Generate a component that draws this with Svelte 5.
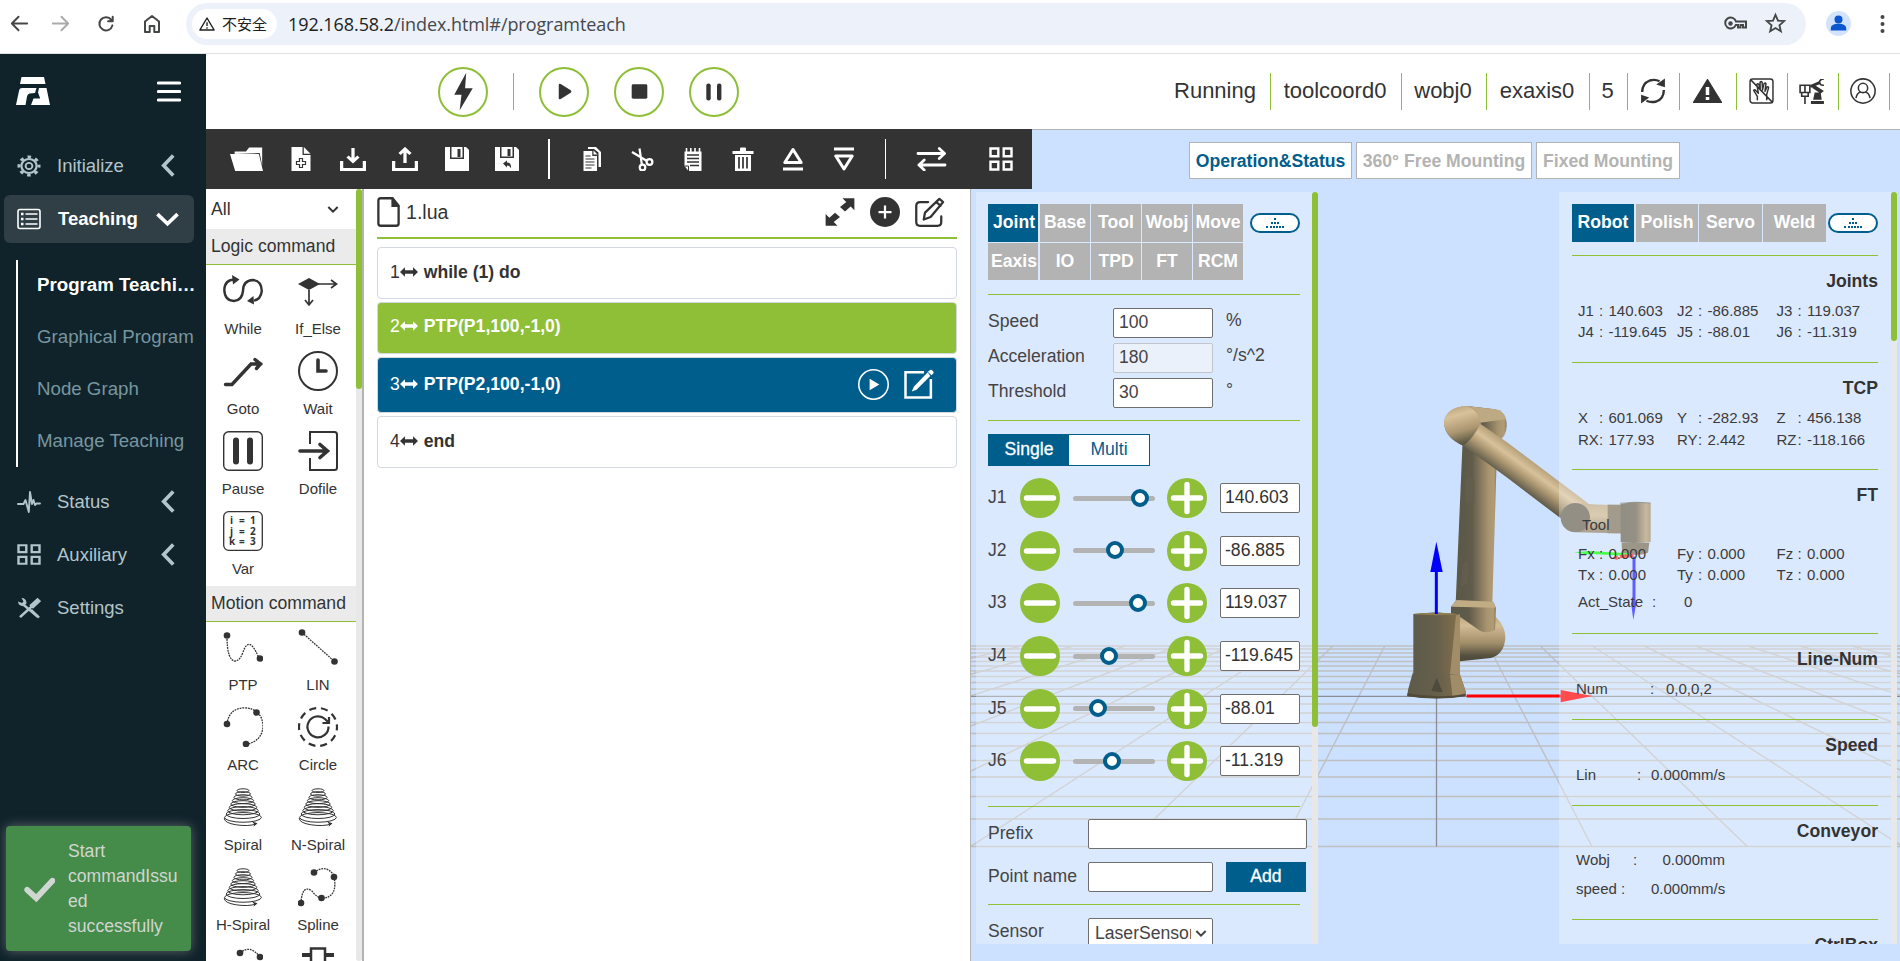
<script>
  const coil = () => {
    let s = '';
    for (let i = 0; i < 9; i++) {
      const w = 6 + i * 1.55;
      s += `<ellipse cx="20" cy="${3.6 + i * 3.35}" rx="${w}" ry="${1.8 + i * 0.38}"/>`;
    }
    return `<g fill="none" stroke="#333" stroke-width="1">${s}<path d="M1.2 31q0 5 12 6.800t20-.8"/></g><path d="M29 34.500l5.500 1.700-4 3.600.8-2.600z" fill="#333"/>`;
  };
  const st = (w, body) => `<g fill="none" stroke="currentColor" stroke-width="${w}" stroke-linecap="round" stroke-linejoin="round">${body}</g>`;
  const dot = (x, y) => `<circle cx="${x}" cy="${y}" r="3.3" fill="#333"/>`;
  const dots = (d) => `<path d="${d}" fill="none" stroke="#333" stroke-width="1.3" stroke-dasharray="1.800 .9"/>`;
  const grid4 = '<g fill="none" stroke="currentColor" stroke-width="2.4"><path d="M1.500 1.500h7.800v7.800H1.500zM14.700 1.500h7.800v7.800h-7.800zM1.500 14.700h7.800v7.800H1.500zM14.700 14.700h7.800v7.800h-7.800z"/></g>';
  const chevLeft = '<path d="M18 1.500L8 12l10 10.500" fill="none" stroke="currentColor" stroke-width="3.8"/>';

  const art = {
    back: st(2, '<path d="M20 12H4M11 5l-7 7 7 7"/>'),
    fwd: st(2, '<path d="M4 12h16M13 5l7 7-7 7"/>'),
    reload: st(2.2, '<path d="M19 13.500A7.200 7.200 0 1 1 17.800 7.500M19.300 4v5h-5"/>'),
    home: st(2, '<path d="M5 20V9.500L12 4l7 5.500V20h-4.700v-6H9.700v6z"/>'),
    warn: '<path d="M12 4L2.500 20h19z" fill="none" stroke="currentColor" stroke-width="1.900" stroke-linejoin="round"/><path d="M12 9.500v5M12 16.300v2" stroke="currentColor" stroke-width="1.800"/>',
    key: '<g fill="none" stroke="currentColor" stroke-width="2"><path d="M13 9.500h10v6h-3v-2.500h-2.500v2.500h-2.500v-2.500h-2.200a5.500 5.500 0 1 1 .2-3.500z"/></g><circle cx="7.500" cy="11.500" r="2.200" fill="currentColor"/>',
    star: '<path d="M12 3l2.600 6 6.400.5-4.900 4.300 1.500 6.300L12 16.700 6.400 20.100l1.500-6.300L3 9.500 9.400 9z" fill="none" stroke="currentColor" stroke-width="1.900"/>',
    bolt: '<path d="M14.400.5L3.800 14h6.400L8.600 23.500 20.200 10h-6.800z" fill="currentColor"/>',
    play: '<path d="M6 4.500q0-2 2-1.200l10.500 7.200q1.500 1.500 0 3L8 20.700q-2 .8-2-1.200z" fill="currentColor"/>',
    stop: '<rect x="4.500" y="4.500" width="15" height="15" rx="1.500" fill="currentColor"/>',
    pause: '<rect x="4.300" y="3.500" width="4.400" height="17" rx="2" fill="currentColor"/><rect x="15" y="3.500" width="4.400" height="17" rx="2" fill="currentColor"/>',
    folder: '<path d="M4.500 7V4.500h11L18.500.5h12.700v18L28.800 6z" fill="currentColor"/><path d="M0 7h28l4 17H5z" fill="currentColor"/>',
    addfile: '<path d="M2.500 0h11v8h8v16h-19z" fill="currentColor"/><path d="M14.800 0l6.700 6.700h-6.700z" fill="currentColor"/><path d="M10.500 11.500h3v3h3v3h-3v3h-3v-3h-3v-3h3z" fill="none" stroke="#333" stroke-width="1.200"/>',
    down: '<path d="M1.500 14v8.500h21V14" fill="none" stroke="currentColor" stroke-width="3"/><path d="M12 1v12M7 9.500l5 5 5-5" fill="none" stroke="currentColor" stroke-width="3"/>',
    up: '<path d="M1.500 14v8.500h21V14" fill="none" stroke="currentColor" stroke-width="3"/><path d="M12 16V3M7 7l5-5 5 5" fill="none" stroke="currentColor" stroke-width="3"/>',
    save: '<path d="M0 0h21l3 3v21H0z" fill="currentColor"/><path d="M5 0h14v12H5z" fill="#333"/><path d="M6.500 0h11v10.500h-11z" fill="currentColor"/><path d="M12.500 2h3v8h-3z" fill="#333"/>',
    saveundo: '<path d="M0 0h21l3 3v21H0z" fill="currentColor"/><path d="M5 0h14v11H5z" fill="#333"/><path d="M6.500 0h11v9.500h-11z" fill="currentColor"/><path d="M12.500 2h3v7h-3z" fill="#333"/><path d="M8 16.500l4-3v2q4.500 0 4 6-1-3-4-3v2z" fill="#333"/>',
    copy: '<path d="M8 0h8l5 5v15h-2.500V5.500L14 2H8z" fill="currentColor"/><path d="M3.500 4h8.800v5h4.700v15H3.500z" fill="currentColor"/><path d="M13.500 3.500l4 4h-4z" fill="currentColor"/><path d="M5.500 9h5M5.500 12h9M5.500 15h9M5.500 18h9M5.500 21h6" stroke="#333"/>',
    cut: '<g fill="none" stroke="currentColor" stroke-width="2.2"><path d="M2 5l15 9M9.500 1.500l2.500 17"/><circle cx="19.500" cy="15" r="2.900"/><circle cx="12.500" cy="20.500" r="2.800"/></g>',
    notes: '<path d="M3.500 4.500h17V24h-13l-4-5z" fill="currentColor"/><path d="M6 8h12M6 11.500h12M6 15h12M9 18.500h9" stroke="#333" stroke-width="1.500"/><path d="M5.500 1v5M9.800 1v5M14 1v5M18.500 1v5" stroke="currentColor" stroke-width="1.600"/><path d="M3.500 19h4v5" fill="none" stroke="#333"/>',
    trash: '<path d="M1.500 4H9V1.500Q9 .5 10 .5h4q1 0 1 1V4h7.500v3h-21z" fill="currentColor"/><path d="M4 8h16v16H4z" fill="currentColor"/><path d="M8 10v11.500M12 10v11.500M16 10v11.500" stroke="#333" stroke-width="1.700"/>',
    triup: '<path d="M12 2.500L3.800 15.500h16.400zM2 22h20" fill="none" stroke="currentColor" stroke-width="3" stroke-linejoin="round"/>',
    tridown: '<path d="M12 22L3.800 9h16.400zM2 2h20" fill="none" stroke="currentColor" stroke-width="3" stroke-linejoin="round"/>',
    swap: st(2.8, '<path d="M2 6.500h27M24 1.500l5.500 5-5.500 5M30 18H3M8.500 13L3 18l5.500 5"/>'),
    grid4,
    refresh: '<g fill="none" stroke="currentColor" stroke-width="2.2"><path d="M2 13Q2 5 9 2.300q5-1.500 9 .7M22 11q0 8-7 10.700-5 1.300-9-.7"/></g><path d="M23 .5v8l-8-2.500zM1 23.500v-8l7.500 2.500z" fill="currentColor"/>',
    alert: '<path d="M12 .5L0 24h24z" fill="currentColor" stroke="currentColor" stroke-linejoin="round"/><path d="M12 8v8M12 18v3" stroke="#fff" stroke-width="2.900"/>',
    hand: st(1.4, '<rect x="1" y="1" width="22" height="22" rx="2.500"/><path d="M8 20v-3L4.500 11.500q.8-1.500 2 0L9 14 7.500 6q1-1.400 2 0l1.300 5L10.600 4q1-1.300 2 0l.4 7L14.500 5q1-1 1.800.3l-1 7 2-4q1.500-.5 1.500.8L17 15v5M1.500 1.500l21 21"/>'),
    arm: '<path d="M11 21h12v3H11zM13 20l1.500-7h5.500l1 7zM20 14l-8-5.500 2-3 9 6z" fill="currentColor"/><path d="M10 6l9-4 1 2.500-9 4z" fill="currentColor"/><path d="M23 0q-4 0-4 3.200T23 6M1 6h9v7H1zM5.500 6v7M2.500 13v3.500h6V13M5.500 17v7" fill="none" stroke="currentColor" stroke-width="1.500"/>',
    user: '<g fill="none" stroke="currentColor" stroke-width="1.400"><circle cx="12" cy="12" r="11.200"/><circle cx="12" cy="9.200" r="4.300"/><path d="M5.500 18.500q1-5 4.500-5.500M18.500 18.500q-1-5-4.500-5.500"/></g>',
    gear: '<circle cx="12" cy="12" r="7.600" fill="none" stroke="currentColor" stroke-width="2.200"/><circle cx="12" cy="12" r="10" fill="none" stroke="currentColor" stroke-width="3" stroke-dasharray="3.600 4.254" stroke-dashoffset="1.800"/><circle cx="12" cy="12" r="3.400" fill="none" stroke="currentColor" stroke-width="1.900"/>',
    list: '<rect x="1" y="2.500" width="22" height="19" rx="2" fill="none" stroke="currentColor" stroke-width="1.600"/><path d="M4 7h2.500M4 12h2.500M4 17h2.500" stroke="currentColor" stroke-width="2.500"/><path d="M8.500 7h12M8.500 12h12M8.500 17h12" stroke="currentColor" stroke-width="1.300"/>',
    pulse: st(1.9, '<path d="M1 14h5.500l2-4 3.300 12L13 2l2 12 1.500-4 1.500 5 1.500-1.500h3.500"/>'),
    tools: '<path d="M3 22L16.500 8.500M5.500 7.500L20.500 21.500" stroke="currentColor" stroke-width="2.600"/><path d="M14 14l8 8.500M14 9l6.500-6.500 2 2L16 11z" stroke="currentColor" stroke-width="2.500" fill="currentColor"/><path d="M1 5l4 1.500L6.500 5 4.500 1q5 0 5 6l-3 3Q1.500 10 1 5z" fill="currentColor"/>',
    chevLeft,
    chevDown: '<path d="M1.500 7.500L12 17.500l10.500-10" fill="none" stroke="currentColor" stroke-width="3.800"/>',
    caret: '<path d="M4 8.500l8 8 8-8" fill="none" stroke="currentColor" stroke-width="3.400"/>',
    check: '<path d="M2.500 13l7 6.500L22 6" fill="none" stroke="currentColor" stroke-width="4.500" stroke-linecap="round"/>',
    file: '<path d="M1.200 3q0-2 2-2h10.300l5.300 6v14q0 2-2 2H3.200q-2 0-2-2z" fill="none" stroke="currentColor" stroke-width="2"/><path d="M12.500 0l7 8h-7z" fill="currentColor"/>',
    expand: '<path d="M14 1h9.500v9.500l-3-3-4.500 4-4-3.500 5-4zM10 23H.5v-9.500l3 3 4.500-4 4 3.500-5 4z" fill="currentColor"/>',
    plus: '<circle cx="12" cy="12" r="12" fill="currentColor"/><path d="M12 6.800v10.400M6.800 12h10.400" stroke="#fff" stroke-width="1.800"/>',
    edit: st(1.800, '<path d="M10.500 4H4Q1 4 1 7v13q0 3 3 3h14q3 0 3-3v-4.500"/><path d="M19.500 1.500l3 2.500L12.500 16l-5.500 2 1-5.500zM17.500 4.500l3 2.500"/>'),
    rowplay: '<circle cx="12" cy="12" r="11.400" fill="none" stroke="currentColor" stroke-width="1.200"/><path d="M9 7.500l7.500 4.500L9 16.500z" fill="currentColor"/>',
    rowedit: '<path d="M16 2.500H1.200v20.300h20.300V8" fill="none" stroke="currentColor" stroke-width="2"/><path d="M19 2.500L8 14l-1.800 4 3.800-1.500L21 5.500zM20 1.500q1.500-2 3 0 1.500 1.200 0 2.500l-1 1-3-2.800z" fill="currentColor"/>',
    lr: '<path d="M0 8l5.500-5.500V6h9V2.500L20 8l-5.500 5.500V10h-9v3.500z" fill="currentColor"/>',

    While: '<g fill="none" stroke="#333" stroke-width="2.400"><path d="M13 8.500Q2 8 1.300 18.500 1.500 29.500 11 30q8-.5 9-10 0-10.500 10-11 8.500.8 8.800 11-1 8.500-8 9.500"/></g><path d="M9 4l7.500 4.500-6.500 5zM30.500 25l-6.500 5 7 3.500z" fill="#333"/>',
    If_Else: '<path d="M0 13l11-6 11 6-11 6z" fill="#333"/><path d="M20 13h18M33 9l5.500 4-5.500 4M11 19v14M7 29l4 5 4-5" fill="none" stroke="#333" stroke-width="1.700"/>',
    Goto: '<path d="M2.500 33.500H9L28 13h10M32 8.500l5.500 4.500-4 4.500" fill="none" stroke="#333" stroke-width="3.400" stroke-linecap="round"/>',
    Wait: '<circle cx="20" cy="20" r="19" fill="none" stroke="#333" stroke-width="2"/><path d="M20 9v11h8" fill="none" stroke="#333" stroke-width="3.600" stroke-linecap="round"/>',
    Pause: '<rect x=".7" y=".7" width="38.600" height="38.600" rx="5" fill="none" stroke="#333" stroke-width="1.400"/><path d="M13 9.500v21M27 9.500v21" stroke="#333" stroke-width="6" stroke-linecap="round"/>',
    Dofile: '<path d="M12 13V1h24.500q2.500 0 2.500 2.500v33q0 2.500-2.500 2.500H12V27" fill="none" stroke="#333" stroke-width="2"/><path d="M2 20h26M22 13.500l7.500 6.500-7.500 6.500" fill="none" stroke="#333" stroke-width="3.600" stroke-linecap="round"/>',
    Var: '<rect x=".7" y=".7" width="38.600" height="38.600" rx="5" fill="none" stroke="#333" stroke-width="1.300"/><g font-family="Open Sans" font-weight="700" font-size="10" fill="#333"><text x="7" y="12.500">i</text><text x="16" y="12.500">=</text><text x="27" y="12.500">1</text><text x="7" y="23.500">j</text><text x="16" y="23.500">=</text><text x="27" y="23.500">2</text><text x="6" y="34">k</text><text x="16" y="34">=</text><text x="27" y="34">3</text></g>',
    PTP: dots('M4 9Q4 34 12.500 34 17 33.500 20 25q6-17 15 4L38 31') + dot(4, 8.500) + dot(37, 31.500),
    LIN: dots('M4 5.500L36.500 34.500') + dot(4, 5.500) + dot(36.500, 34.500),
    ARC: dots('M4 17Q6 1 22 .8 39 2 40 19q-.5 15-17 18.500') + dot(4, 17) + dot(33.500, 5.500) + dot(23, 37),
    Circle: '<circle cx="20" cy="20" r="19" fill="none" stroke="#333" stroke-width="2.200" stroke-dasharray="7 4.940" stroke-dashoffset="3.500"/><path d="M30.500 19.500A10.500 10.500 0 1 1 27 12l3 3M31 10v6h-6.500" fill="none" stroke="#333" stroke-width="2.200"/>',
    Spiral: coil(), 'N-Spiral': coil(), 'H-Spiral': coil(),
    Spline: dots('M16 5.500Q27-3 35.500 7.500 41 30 24 31.500 18 30 14 24 4 17 3 36') + dot(16, 5.500) + dot(36, 10) + dot(23.500, 31) + dot(3, 36),
    next1: dots('M17 6q10-9 20 4') + dot(17, 6) + dot(37, 10),
    next2: '<path d="M4 8h10M26 8h10" stroke="#333" stroke-width="4"/><path d="M13 14V1.500h14V14" fill="none" stroke="#333" stroke-width="2.500"/>'
  };

  const tools = ['folder', 'addfile', 'down', 'up', 'save', 'saveundo', '|', 'copy', 'cut', 'notes', 'trash', 'triup', 'tridown', '|', 'swap', 'grid4'];
  const logic = ['While', 'If_Else', 'Goto', 'Wait', 'Pause', 'Dofile', 'Var'];
  const motion = ['PTP', 'LIN', 'ARC', 'Circle', 'Spiral', 'N-Spiral', 'H-Spiral', 'Spline', 'next1', 'next2'];
  const lines = [
    { n: 1, code: 'while (1) do' },
    { n: 2, code: 'PTP(P1,100,-1,0)', kind: 'green' },
    { n: 3, code: 'PTP(P2,100,-1,0)', kind: 'blue' },
    { n: 4, code: 'end' }
  ];
  const joints = [
    ['J1', '140.603', 67], ['J2', '-86.885', 41.500], ['J3', '119.037', 65],
    ['J4', '-119.645', 35.500], ['J5', '-88.01', 24.500], ['J6', '-11.319', 38.500]
  ];
  const horiz = [646, 649, 653, 657, 661.500, 666, 671, 676.500, 682.500, 689, 704, 713, 722.500, 733.500, 746, 760.500, 777, 796.500, 819, 846.500];
  const fan = Array.from({ length: 21 }, (_, i) => i - 10);
</script>

{#snippet icon(name, w = 24, h = 24, vb = '0 0 24 24')}
  <svg width={w} height={h} viewBox={vb} preserveAspectRatio="none">{@html art[name]}</svg>
{/snippet}

{#snippet chip()}
  <span class="chip"><svg width="18" height="11" viewBox="0 0 18 11">
    <path d="M8 1h2M5 5h2M8 5h2M11 5h2M0 9h2M4 9h2M7 9h2M10 9h2M13 9h2M16 9h2" stroke="#005e8d" stroke-width="2" /></svg></span>
{/snippet}

{#snippet stat(k, v)}
  <div class="stat"><span>{k}</span><b>:</b><i>{v}</i></div>
{/snippet}

{#snippet cmds(names, cls = '')}
  <div class="cmds {cls}">
    {#each names as n}
      <div class="cmd">{@render icon(n, 40, 40, '0 0 40 40')}<span>{n.startsWith('next') ? '' : n}</span></div>
    {/each}
  </div>
{/snippet}

<div class="page">
  <div class="chrome">
    <span class="nav">{@render icon('back', 23, 23)}</span>
    <span class="nav faded">{@render icon('fwd', 23, 23)}</span>
    <span class="nav">{@render icon('reload', 22, 22)}</span>
    <span class="nav">{@render icon('home', 24, 24)}</span>
    <div class="address">
      <span class="secure">{@render icon('warn', 18, 18)}<em>不安全</em></span>
      <span class="url"><em>192.168.58.2</em>/index.html#/programteach</span>
      <span class="addricons">{@render icon('key', 24, 24)}{@render icon('star', 23, 23)}</span>
    </div>
    <span class="avatar"><svg width="25" height="25" viewBox="0 0 25 25"><circle cx="12.500" cy="12.500" r="12.500" fill="#d3e3fd" /><circle cx="12.500" cy="8.500" r="4" fill="#0b57d0" /><path d="M4.800 19.500v-2.300q0-4.500 7.700-4.500t7.700 4.500v2.300z" fill="#0b57d0" /></svg></span>
    <span class="kebab"><svg width="5" height="20" viewBox="0 0 5 20"><circle cx="2.500" cy="3" r="2" /><circle cx="2.500" cy="10" r="2" /><circle cx="2.500" cy="17" r="2" /></svg></span>
  </div>

  <div class="app">
    <aside>
      <div class="brand">
        <svg width="34" height="28" viewBox="0 0 34 28" fill="#fff"><path d="M5.500 0H28l1.500 7H4zM0 28L3.200 13q.5-2 2.800-2h14.500L19 16l-5.500.5q-2 .5-2.500 3L9.500 28zM23 11h7.500L34 28H15l2.500-6.500h6.700L22 15.500z" /></svg>
        <svg width="24" height="21" viewBox="0 0 24 21"><path d="M1.500 2h21M1.500 10.500h21M1.500 19h21" stroke="#fff" stroke-width="3.200" stroke-linecap="round" /></svg>
      </div>
      <div class="item">{@render icon('gear', 22, 22)}<span>Initialize</span>{@render icon('chevLeft', 23, 23)}</div>
      <div class="item active">{@render icon('list')}<span>Teaching</span>{@render icon('chevDown', 23, 23)}</div>
      <div class="sub">
        <span class="cur">Program Teaching</span><span>Graphical Program</span><span>Node Graph</span><span>Manage Teaching</span>
      </div>
      <div class="item">{@render icon('pulse')}<span>Status</span>{@render icon('chevLeft', 23, 23)}</div>
      <div class="item">{@render icon('grid4', 21, 21)}<span>Auxiliary</span>{@render icon('chevLeft', 23, 23)}</div>
      <div class="item">{@render icon('tools', 22, 22)}<span>Settings</span></div>
      <div class="toast">{@render icon('check', 31, 31)}<p>Start commandIssued successfully</p></div>
    </aside>

    <main>
      <header>
        <div class="run">
          <span class="round">{@render icon('bolt', 27, 39)}</span>
          <span class="bar"></span>
          <span class="round">{@render icon('play', 23, 21)}</span>
          <span class="round">{@render icon('stop', 25, 23)}</span>
          <span class="round">{@render icon('pause', 24, 24)}</span>
        </div>
        <div class="info">
          <span>Running</span><span>toolcoord0</span><span>wobj0</span><span>exaxis0</span><span>5</span>
          <span>{@render icon('refresh', 26, 26)}</span><span>{@render icon('alert', 29, 24)}</span><span>{@render icon('hand', 25, 26)}</span>
          <span>{@render icon('arm', 26, 25)}</span><span>{@render icon('user', 26, 26)}</span>
        </div>
      </header>

      <div class="work">
        <div class="toolbar">
          {#each tools as t, i}
            {#if t === '|'}<span class="tsep" class:thin={i > 8}></span>
            {:else if t === 'folder'}{@render icon(t, 33, 24, '0 0 32 24')}
            {:else if t === 'swap'}{@render icon(t, 31, 24, '0 0 32 24')}
            {:else if t === 'down' || t === 'up'}{@render icon(t, 26, 24)}
            {:else}{@render icon(t, 24, 24)}{/if}
          {/each}
        </div>

        <div class="palette">
          <div class="list">
            <div class="filter"><span>All</span>{@render icon('caret', 14, 14)}</div>
            <div class="band">Logic command</div>
            {@render cmds(logic)}
            <div class="band">Motion command</div>
            {@render cmds(motion, 'motion')}
          </div>
          <div class="track"><div class="thumb t1"></div></div>
        </div>

        <div class="program">
          <div class="title">
            {@render icon('file', 23, 30, '0 0 20 24')}<span>1.lua</span>
            {@render icon('expand', 30, 30)}{@render icon('plus', 30, 30)}{@render icon('edit', 30, 30)}
          </div>
          {#each lines as l}
            <div class="line {l.kind ?? ''}">
              <span>{l.n}</span>{@render icon('lr', 18, 14, '0 0 20 16')}<b>{l.code}</b>
              {#if l.n === 3}<span class="acts">{@render icon('rowplay', 31, 31)}{@render icon('rowedit', 30, 30)}</span>{/if}
            </div>
          {/each}
        </div>

        <div class="scene">
          <svg class="world" width="929" height="831" viewBox="971 130 929 831">
            <defs>
              <linearGradient id="up"><stop offset="0" stop-color="#5b5847" /><stop offset=".4" stop-color="#605b4a" /><stop offset=".8" stop-color="#a8946f" /><stop offset=".94" stop-color="#b09c76" /><stop offset="1" stop-color="#85785d" /></linearGradient>
              <linearGradient id="fore" gradientUnits="userSpaceOnUse" x1="630" y1="232" x2="568" y2="318"><stop offset="0" stop-color="#b09b75" /><stop offset=".3" stop-color="#d8c29b" /><stop offset=".55" stop-color="#ab9671" /><stop offset=".85" stop-color="#635e4c" /><stop offset="1" stop-color="#4d4a3c" /></linearGradient>
              <linearGradient id="elbow" x1="0" y1="0" x2=".25" y2="1"><stop offset="0" stop-color="#b09b75" /><stop offset=".3" stop-color="#d8c29b" /><stop offset=".7" stop-color="#ab9671" /><stop offset="1" stop-color="#5d5845" /></linearGradient>
              <linearGradient id="sh" x1="0" y1="0" x2="0" y2="1"><stop offset="0" stop-color="#ac9873" /><stop offset=".3" stop-color="#d2bc95" /><stop offset=".65" stop-color="#a08d68" /><stop offset=".88" stop-color="#565241" /><stop offset="1" stop-color="#4b483a" /></linearGradient>
              <linearGradient id="base"><stop offset="0" stop-color="#5e5b4a" /><stop offset=".5" stop-color="#665f4b" /><stop offset=".9" stop-color="#7f6d4b" /></linearGradient>
              <linearGradient id="tool"><stop offset="0" stop-color="#625e50" /><stop offset=".5" stop-color="#67604f" /><stop offset=".85" stop-color="#b09c76" /><stop offset="1" stop-color="#958566" /></linearGradient>
              <linearGradient id="wr" x1="0" y1="0" x2="0" y2="1"><stop offset="0" stop-color="#b9a681" /><stop offset=".4" stop-color="#cbb791" /><stop offset="1" stop-color="#817359" /></linearGradient>
            </defs>
            <g stroke="#bfc0c1" stroke-width="1.400">
              {#each horiz as y}<path d="M971 {y}H1900" />{/each}
              {#each fan as k}{#if k !== 0}<path d="M{1436.600 + 51.900 * k} 646L{1436.600 + 155.300 * k} 846.500" />{/if}{/each}
            </g>
            <path d="M971 696.300H1900M1436.500 646V846.500" stroke="#8a8e94" stroke-width="1.300" />
            <g transform="translate(1320 380) scale(.33333)">
              <path d="M440 948H722" stroke="#f00" stroke-width="9" /><path d="M722 930L818 948 722 967z" fill="#f00" />
              <path d="M428 180L530 240 517 670H407z" fill="url(#up)" />
              <path d="M437 300q12-20 24-4v70q-12 12-26 0zM427 556q8-18 18-6v60l-22 10z" fill="#625d4c" />
              <path d="M410 706L500 690Q522 702 532 716 556 740 556 772 554 822 513 834L420 844z" fill="url(#sh)" />
              <path d="M393 680L410 660 520 665 528 683 525 750Q500 762 480 752L422 712 393 703z" fill="url(#up)" />
              <path d="M393 680L410 660 520 665 527 683z" fill="#c1ac86" />
              <path d="M280 702L350 697 420 704V885H280z" fill="url(#base)" />
              <path d="M408 706L420 703V885L390 883z" fill="#a18d68" />
              <path d="M280 872V882Q330 873 390 882L420 884 438 936 436 948Q350 962 262 948L264 930z" fill="url(#base)" />
              <path d="M390 884L420 882 438 938 398 954z" fill="#a08c67" />
              <path d="M350 893L368 937 334 933z" fill="#4e4a3c" />
              <path d="M262 940Q350 956 438 942L436 949Q350 962 262 949z" fill="#514a38" />
              <ellipse cx="347" cy="702" rx="65" ry="3.500" fill="#8f7c50" />
              <path d="M349 702V570" stroke="#00f" stroke-width="9" /><path d="M349 485L368 576H331z" fill="#00f" />
              <path d="M440 78L525 88Q561 95 560 138 558 168 540 180L480 135z" fill="url(#up)" />
              <path d="M440 78L525 88Q552 92 558 118L480 128z" fill="#bda983" />
              <path d="M372 128Q376 82 440 78 478 84 482 132L560 186 804 370 820 420 780 450 718 412 560 292 430 197Q374 172 372 128z" fill="url(#fore)" />
              <path d="M372 128Q376 82 440 78 478 90 482 132 455 180 430 197 374 172 372 128z" fill="url(#elbow)" />
              <path d="M785 370Q830 376 905 375V460L770 457z" fill="url(#wr)" />
              <path d="M863 374H905V460H863z" fill="#7a6f59" />
              <circle cx="766" cy="413" r="44" fill="#655f4f" />
              <path d="M902 372Q945 362 992 370V486Q945 492 902 487z" fill="url(#tool)" />
              <path d="M905 488H988L984 518Q950 530 906 520z" fill="#716957" />
              <path d="M900 370Q945 364 992 369" stroke="#4c4839" stroke-width="2" fill="none" />
              <path d="M942 530V680" stroke="#1a1aff" stroke-width="9" /><path d="M933 668H949L940 720z" fill="#1a1aff" />
              <path d="M930 524L815 518" stroke="#0f0" stroke-width="8" /><path d="M762 517L816 512V525z" fill="#0f0" />
              <path d="M940 526L900 530" stroke="#f22" stroke-width="10" /><path d="M875 535L893 526V540z" fill="#f22" />
            </g>
          </svg>

          <div class="mounts"><span class="on">Operation&amp;Status</span><span>360° Free Mounting</span><span>Fixed Mounting</span></div>

          <div class="panels">
            <div class="panel op">
              <div class="body">
                <div class="tabrow">
                  <div class="tabs five">
                    {#each ['Joint', 'Base', 'Tool', 'Wobj', 'Move', 'Eaxis', 'IO', 'TPD', 'FT', 'RCM'] as t}<span class:on={t === 'Joint'}>{t}</span>{/each}
                  </div>
                  {@render chip()}
                </div>
                <hr />
                <div class="params">
                  <span>Speed</span><div class="field">100</div><i>%</i>
                  <span>Acceleration</span><div class="field off">180</div><i>°/s^2</i>
                  <span>Threshold</span><div class="field">30</div><i>°</i>
                </div>
                <hr />
                <div class="mode"><span class="on">Single</span><span>Multi</span></div>
                <div class="joints">
                  {#each joints as [n, v, x]}
                    <div class="joint">
                      <span>{n}</span>
                      <svg width="40" height="40" viewBox="0 0 40 40"><circle cx="20" cy="20" r="20" fill="#8ebf37" /><path d="M6.500 20h27" stroke="#fff" stroke-width="5.400" stroke-linecap="round" /></svg>
                      <div class="slider"><div class="knob" style="left:{x - 9}px"></div></div>
                      <svg width="40" height="40" viewBox="0 0 40 40"><circle cx="20" cy="20" r="20" fill="#8ebf37" /><path d="M6.500 20h27M20 6.500v27" stroke="#fff" stroke-width="5.400" stroke-linecap="round" /></svg>
                      <div class="field">{v}</div>
                    </div>
                  {/each}
                </div>
                <hr />
                <div class="point">
                  <span>Prefix</span><div class="field wide"></div>
                  <span>Point name</span><div class="field"></div><button>Add</button>
                </div>
                <hr />
                <div class="sensor"><span>Sensor</span><div class="field"><em>LaserSensor</em>{@render icon('caret', 14, 14)}</div></div>
              </div>
              <div class="track"><div class="thumb t2"></div></div>
            </div>

            <div class="panel status">
              <div class="body">
                <div class="tabrow">
                  <div class="tabs four">{#each ['Robot', 'Polish', 'Servo', 'Weld'] as t}<span class:on={t === 'Robot'}>{t}</span>{/each}</div>
                  {@render chip()}
                </div>
                <section class="s3">
                  <h4>Joints</h4>
                  <div class="stats">{@render stat('J1', '140.603')}{@render stat('J2', '-86.885')}{@render stat('J3', '119.037')}{@render stat('J4', '-119.645')}{@render stat('J5', '-88.01')}{@render stat('J6', '-11.319')}</div>
                </section>
                <section class="s3 tcp">
                  <h4>TCP</h4>
                  <div class="stats">{@render stat('X', '601.069')}{@render stat('Y', '-282.93')}{@render stat('Z', '456.138')}{@render stat('RX', '177.93')}{@render stat('RY', '2.442')}{@render stat('RZ', '-118.166')}</div>
                </section>
                <section class="ft">
                  <h4>FT</h4>
                  <p>Tool</p>
                  <div class="stats">{@render stat('Fx', '0.000')}{@render stat('Fy', '0.000')}{@render stat('Fz', '0.000')}{@render stat('Tx', '0.000')}{@render stat('Ty', '0.000')}{@render stat('Tz', '0.000')}</div>
                  <div class="kv act"><span>Act_State</span><b>:</b><i>0</i></div>
                </section>
                <section class="s1"><h4>Line-Num</h4><div class="kv num"><span>Num</span><b>:</b><i>0,0,0,2</i></div></section>
                <section class="s1"><h4>Speed</h4><div class="kv lin"><span>Lin</span><b>:</b><i>0.000mm/s</i></div></section>
                <section class="s2">
                  <h4>Conveyor</h4>
                  <div class="kv wobj"><span>Wobj</span><b>:</b><i>0.000mm</i></div>
                  <div class="kv spd"><span>speed</span><b>:</b><i>0.000mm/s</i></div>
                </section>
                <section><h4>CtrlBox</h4></section>
              </div>
              <div class="track"><div class="thumb t3"></div></div>
            </div>
          </div>
        </div>
      </div>
    </main>
  </div>
</div>

<style>
  * { box-sizing: border-box; }
  svg { display: block; flex: none; }
  em, i { font-style: normal; }
  .page { width: 1900px; height: 961px; overflow: hidden; background: #fff; color: #333; font: 17.6px/24px "Liberation Sans", Arial, sans-serif; }

  .chrome { height: 54px; padding-bottom: 6px; border-bottom: 1px solid #dfe1e5; display: flex; align-items: center; color: #454746; }
  .nav { width: 45px; display: flex; justify-content: center; }
  .nav:first-child { width: 38px; }
  .nav:nth-child(3) { width: 46px; }
  .nav:nth-child(4) { width: 45px; margin-right: 12px; }
  .faded { color: #a9abab; }
  .address { width: 1620px; height: 42px; border-radius: 21px; background: #ecf1fa; display: flex; align-items: center; padding: 0 19px 0 6px; }
  .secure { width: 85px; height: 30px; border-radius: 15px; background: #fff; display: flex; align-items: center; gap: 6px; padding-left: 6px; font: 15px/30px "Noto Sans CJK SC", sans-serif; white-space: nowrap; color: #1f1f1f; }
  .secure em { padding-top: 1px; }
  .url { margin-left: 11px; font: 18px/30px "Open Sans", sans-serif; letter-spacing: -.07px; color: #45484c; flex: 1; }
  .url em { color: #202124; }
  .addricons { display: flex; gap: 17px; align-items: center; }
  .avatar { margin-left: 20px; }
  .kebab { margin-left: 29px; fill: #454746; }

  .app { display: flex; height: 907px; }
  aside { width: 206px; background: #10232a; position: relative; color: #a9bcc2; font-size: 18.500px; flex: none; }
  .brand { height: 85px; padding: 0 25px 11px 16px; display: flex; align-items: center; justify-content: space-between; }
  .item { height: 53px; display: flex; align-items: center; padding-left: 17px; color: #b3c5cb; }
  .item > :global(svg:first-child) { width: 24px; }
  .item span { width: 99px; margin-left: 16px; }
  .item.active { margin: 3px 12px 17px 4px; padding-left: 13px; padding-bottom: 1px; height: 48px; background: #303f45; border-radius: 6px; color: #fff; font-weight: 700; }
  .active span { width: 98px; margin-left: 17px; }
  .sub { margin: 0 0 8px 16px; border-left: 2px solid #fff; height: 207px; padding-left: 19px; display: grid; grid-auto-rows: 52px; align-items: center; color: #7896a0; white-space: nowrap; font-size: 18.700px; }
  .sub span { width: 162px; overflow: hidden; text-overflow: ellipsis; padding-bottom: 2px; }
  .sub .cur { color: #fff; font-weight: 700; width: 161px; }
  .toast { position: absolute; left: 6px; top: 772px; width: 185px; height: 125px; border-radius: 4px; background: #458b4a; box-shadow: 0 0 12px rgba(160, 160, 160, .55); display: flex; align-items: center; padding-left: 18px; color: #d0d6d1; font-size: 17.600px; line-height: 25px; }
  .toast p { margin: 0 0 0 13px; width: 110px; overflow-wrap: anywhere; }

  main { flex: 1; }
  header { height: 75px; display: flex; justify-content: space-between; background: #fff; }
  .run { display: flex; align-items: center; padding-left: 232px; gap: 25px; }
  .round { width: 50px; height: 50px; border: 2px solid #8ebf37; border-radius: 50%; display: grid; place-items: center; }
  .bar { width: 1px; height: 37px; background: #8ebf37; }
  .info { display: grid; grid-template-columns: 109px 131px 85px 103px 38px 52px 57px 51px 51px 51px; align-content: center; padding-right: 10px; font-size: 22px; }
  .info span { height: 37px; border-right: 1.500px solid #8ebf37; display: grid; place-items: center; padding: 0 2px 1px 0; }

  .work { height: 832px; display: grid; grid-template: 60px 772px / 158px 606px 930px; }
  .toolbar { grid-area: 1 / 1 / 2 / 4; width: 826px; background: #333; color: #fff; z-index: 2; display: grid; grid-template-columns: 53px 56px 48px 56px 47px 54px 30px 55px 46px 55px 46px 54px 47px 37px 54px 86px; align-items: center; justify-items: center; padding-left: 14px; }
  .tsep { width: 2px; height: 40px; background: #fff; }
  .thin { width: 1px; }

  .palette { grid-area: 2 / 1; display: flex; background: #fff; border-right: 2px solid #b3b3b3; overflow: hidden; }
  .list { width: 150px; }
  .filter { height: 40px; display: flex; align-items: center; justify-content: space-between; padding: 0 16px 0 5px; }
  .band { height: 36px; background: #ebebeb; border-bottom: 1px solid #8ebf37; padding-left: 5px; line-height: 34px; white-space: nowrap; }
  .cmds { display: grid; grid-template-columns: 74px 76px; grid-auto-rows: 80px; padding-top: 6px; height: 321px; }
  .motion { padding-top: 5px; }
  .cmd { display: flex; flex-direction: column; align-items: center; font-size: 15px; white-space: nowrap; line-height: 18px; gap: 9px; }
  .track { width: 6px; background: #e8e8e8; border-radius: 3px; flex: none; }
  .thumb { background: #8ebf37; border-radius: 3px; }
  .t1 { height: 200px; } .t2 { height: 535px; } .t3 { height: 149px; }

  .program { grid-area: 2 / 2; background: #fff; padding: 0 13px; }
  .title { height: 50px; border-bottom: 2px solid #8ebf37; display: flex; align-items: center; gap: 15px; padding: 0 12px 2px 0; font-size: 19.600px; margin-bottom: 8px; }
  .title span { flex: 1; margin-left: -9px; }
  .line { height: 52px; border: 1px solid #d3d7e0; border-radius: 4px; margin-bottom: 3px; display: flex; align-items: center; padding-left: 12px; padding-bottom: 2px; }
  .line b { margin-left: 6px; flex: 1; }
  .green { background: #8ebf37; color: #fff; padding-bottom: 4px; }
  .blue { background: #005e8d; color: #fff; height: 56px; }
  .acts { display: flex; gap: 15px; padding-right: 22px; align-items: center; }

  .scene { grid-area: 1 / 3 / 3 / 4; position: relative; background: #cce0ff; border-top: 1px solid #b3b3b3; border-left: 1px solid #b3b3b3; }
  .world { position: absolute; left: 0; top: 0; }
  .mounts { position: relative; display: flex; gap: 4px; padding: 12px 0 0 218px; height: 62px; font-weight: 700; color: #b3b3b3; }
  .mounts span { height: 37px; border: 1px solid #b3b3b3; background: #fff; text-align: center; line-height: 36px; width: 163px; }
  .mounts span:nth-child(2) { width: 176px; } .mounts span:nth-child(3) { width: 144px; }
  .mounts .on { color: #005e8d; }
  .panels { position: relative; display: flex; justify-content: space-between; padding: 0 3px 0 5px; height: 752px; }
  .panel { background: rgba(255, 255, 255, .3); display: flex; overflow: hidden; }
  .op { width: 342px; } .status { width: 338px; }
  .body { padding: 12px 12px 0; width: 336px; }
  .status .body { width: 332px; padding-left: 13px; padding-right: 13px; }
  .tabrow { display: flex; justify-content: space-between; }
  .tabs { display: grid; gap: 1px; grid-auto-rows: 38px 37px; font-weight: 700; color: #fff; white-space: nowrap; }
  .five { grid-template-columns: 51px 50px 50px 50px 50px; margin-bottom: 14px; }
  .four { grid-template-columns: 63px 62px 63px 63px; margin-bottom: 13px; }
  .tabs span { background: #b3b3b3; padding-top: 6px; text-align: center; width: 100%; }
  .tabs .on { background: #005e8d; }
  .five span:nth-child(5n+1) { width: 50px; padding-left: 2px; } .four span:first-child { width: 62px; }
  .chip { width: 50px; height: 20px; margin-top: 9px; background: #fff; border: 2px solid #005e8d; border-radius: 10px; display: grid; place-items: center; }
  hr { margin: 0; border: 0; height: 1px; background: #8ebf37; }
  .field { height: 30px; border: 1px solid #6f6f6f; border-radius: 2px; background: #fff; padding-left: 5px; line-height: 26px; white-space: nowrap; overflow: hidden; }
  .off { background: #ebf1fa; border-color: #c2c6cc; }
  .params { display: grid; grid-template-columns: 125px 100px 1fr; grid-auto-rows: 30px; row-gap: 5px; padding: 13px 0 12px; line-height: 27px; color: #444; }
  .params i { padding-left: 13px; line-height: 24px; }
  .mode { margin-top: 13px; width: 162px; height: 32px; border: 1px solid #005e8d; background: #fff; display: grid; grid-template-columns: 80px 80px; text-align: center; line-height: 28px; color: #005e8d; }
  .mode .on { background: #005e8d; color: #fff; -webkit-text-stroke: .3px #fff; }
  .joints { padding-top: 6px; height: 340px; }
  .joint { height: 52.600px; display: flex; align-items: center; }
  .joint span { width: 32px; color: #444; padding-bottom: 2px; }
  .slider { width: 82px; height: 5px; border-radius: 3px; background: #b3b3b3; margin: 0 12px 0 13px; position: relative; }
  .knob { position: absolute; top: -7px; width: 18px; height: 18px; border-radius: 50%; border: 4px solid #005e8d; background: #fff; }
  .joint .field { width: 80px; margin-left: 13px; padding-left: 4px; }
  .point { display: grid; grid-template-columns: 100px 125px 93px; grid-auto-rows: 30px; row-gap: 13px; padding: 12px 0; line-height: 28px; width: 320px; color: #444; }
  .wide { grid-column: 2 / 4; width: 219px; }
  .point button { margin: 0 0 0 13px; width: 80px; border: 0; background: #005e8d; color: #fff; font: 17.600px/26px "Liberation Sans", sans-serif; padding: 0 0 3px; -webkit-text-stroke: .3px #fff; }
  .sensor { display: grid; grid-template-columns: 100px 125px; padding-top: 13px; line-height: 27px; color: #444; }
  .sensor .field { display: flex; align-items: center; gap: 3px; line-height: 28px; padding-left: 6px; }
  .sensor em { width: 96px; overflow: hidden; }

  section { border-top: 1px solid #8ebf37; padding-top: 13px; font-size: 15px; color: #3b3b3b; }
  h4 { margin: 0; font-size: 17.600px; line-height: 24px; text-align: right; color: #333; }
  .s3 { height: 107px; } .ft { height: 164px; } .s1 { height: 86px; } .s2 { height: 114px; }
  .stats { display: grid; grid-template-columns: 99px 99.500px 1fr; grid-auto-rows: 21px; padding: 7px 0 0 6px; line-height: 21px; white-space: nowrap; }
  .tcp .stats { grid-auto-rows: 22px; }
  .stat { display: flex; }
  .stat span { width: 21px; } .stat b { width: 9.500px; font-weight: 400; }
  .kv b { font-weight: 400; }
  .ft p { margin: 7px 0 0 10px; line-height: 21px; }
  .ft .stats { padding-top: 8px; }
  .kv { display: flex; line-height: 20px; padding: 8px 0 0 4px; white-space: nowrap; }
  .kv span { width: 74px; } .kv b { width: 16px; }
  .act { padding: 7px 0 0 6px; } .act b { width: 32px; }
  .lin span { width: 61px; } .lin b { width: 14px; }
  .wobj span { width: 57px; } .wobj b { width: 29.500px; }
  .spd span { width: 45px; } .spd b { width: 30px; }
  .s2 .wobj { padding-top: 7px; }
  .s2 .spd { padding-top: 9px; }
</style>
